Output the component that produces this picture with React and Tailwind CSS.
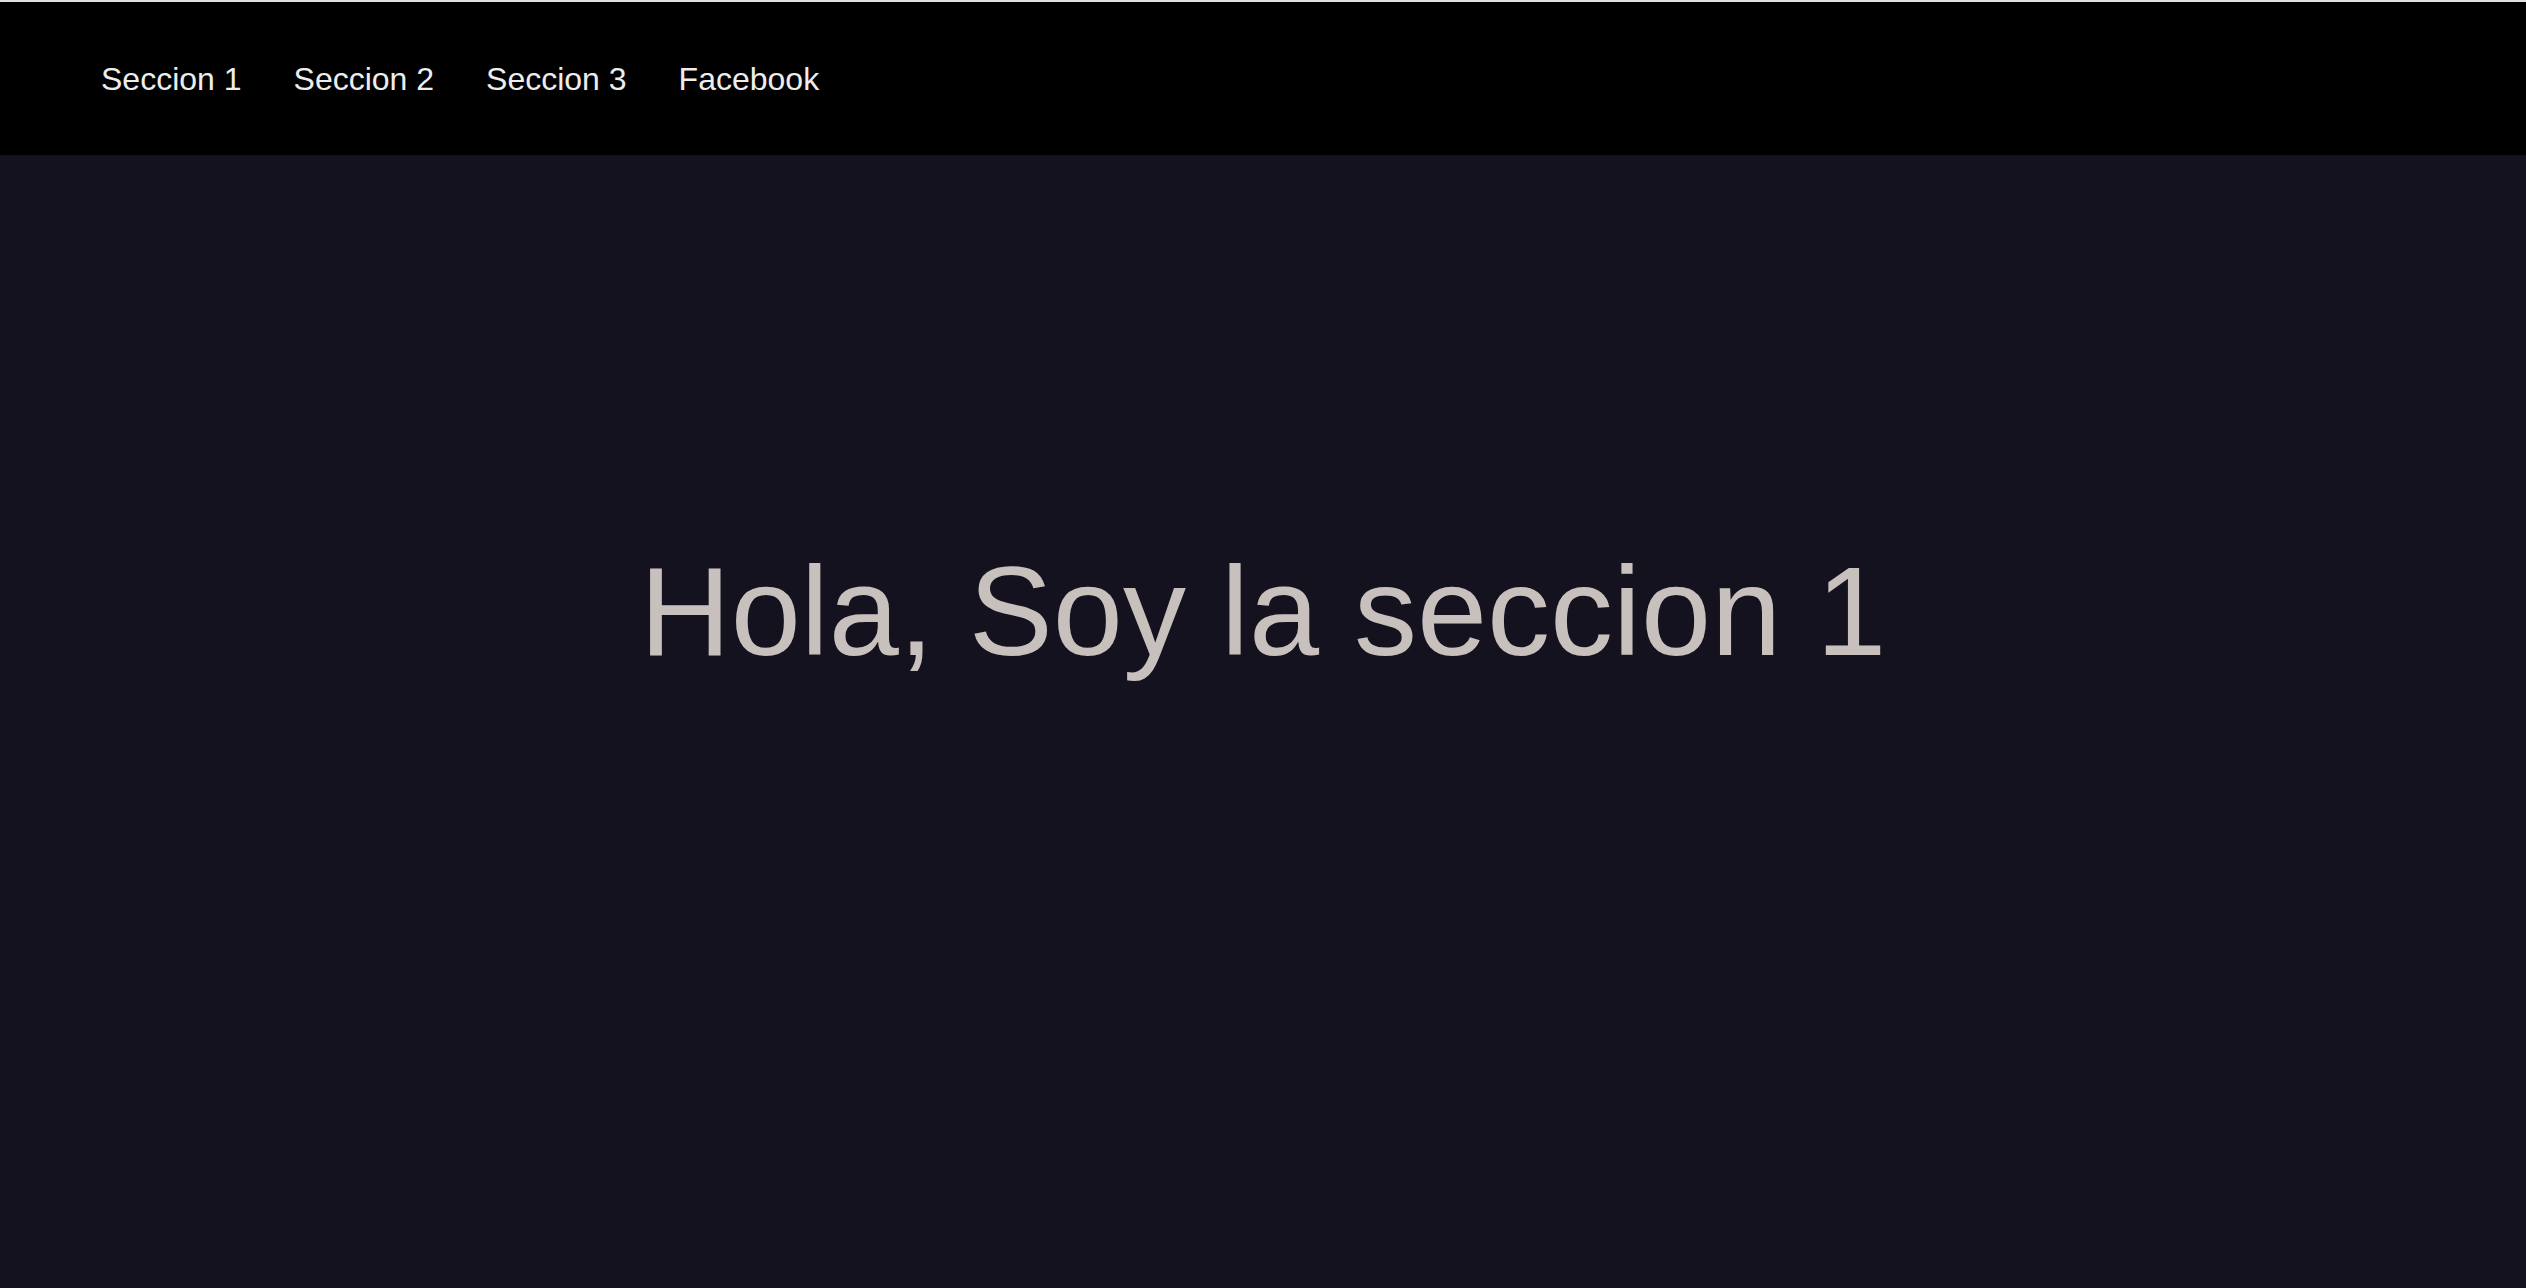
import React from "react";

export default function App() {
  const links = ["Seccion 1", "Seccion 2", "Seccion 3", "Facebook"];

  return (
    <div
      className="min-h-screen flex flex-col bg-[#15121f] border-t-2 border-[#dcdfe3]"
      style={{ fontFamily: '"Liberation Sans", Arial, sans-serif' }}
    >
      <nav className="h-[153px] bg-black flex items-center pl-[101px] gap-[52px]">
        {links.map((l) => (
          <a key={l} href="#" className="text-[32px] text-[#ededed] leading-none">
            {l}
          </a>
        ))}
      </nav>

      <main className="flex-1 flex justify-center pt-[385px]">
        <h1 className="text-[126px] leading-[1.15] text-[#c8c0bd] font-normal">
          Hola, Soy la seccion 1
        </h1>
      </main>
    </div>
  );
}
